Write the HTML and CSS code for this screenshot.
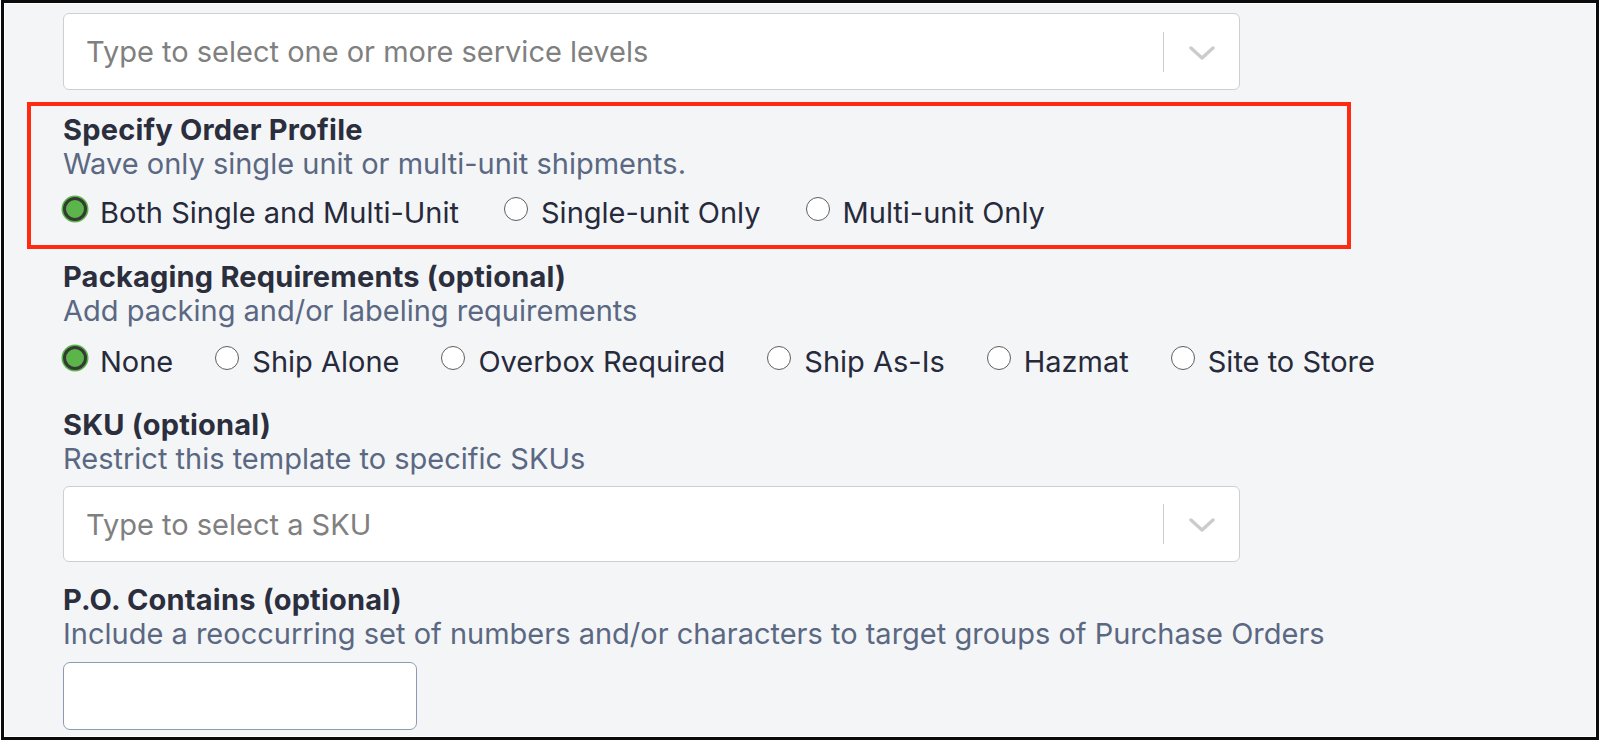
FILE: index.html
```html
<!DOCTYPE html>
<html lang="en">
<head>
<meta charset="utf-8">
<title>Wave template</title>
<link rel="stylesheet" href="styles.css">
</head>
<body>
<div class="frame">
  <div class="form">
    <div class="select select-top">
      <span class="placeholder">Type to select one or more service levels</span>
      <span class="indicators">
        <span class="divider"></span>
        <span class="chevron"><svg width="26" height="16" viewBox="0 0 26 16"><path d="M2 3 L13 13 L24 3" fill="none" stroke="#cccccc" stroke-width="3.4" stroke-linecap="round" stroke-linejoin="round"/></svg></span>
      </span>
    </div>

    <section class="field highlight">
      <div class="label">Specify Order Profile</div>
      <div class="desc">Wave only single unit or multi-unit shipments.</div>
      <div class="radios radios-1">
        <label class="radio"><span class="dot checked"></span><span class="text">Both Single and Multi-Unit</span></label>
        <label class="radio"><span class="dot"></span><span class="text">Single-unit Only</span></label>
        <label class="radio"><span class="dot"></span><span class="text">Multi-unit Only</span></label>
      </div>
    </section>

    <section class="field pack">
      <div class="label">Packaging Requirements (optional)</div>
      <div class="desc">Add packing and/or labeling requirements</div>
      <div class="radios radios-2">
        <label class="radio"><span class="dot checked"></span><span class="text">None</span></label>
        <label class="radio"><span class="dot"></span><span class="text">Ship Alone</span></label>
        <label class="radio"><span class="dot"></span><span class="text">Overbox Required</span></label>
        <label class="radio"><span class="dot"></span><span class="text">Ship As-Is</span></label>
        <label class="radio"><span class="dot"></span><span class="text">Hazmat</span></label>
        <label class="radio"><span class="dot"></span><span class="text">Site to Store</span></label>
      </div>
    </section>

    <section class="field sku">
      <div class="label">SKU (optional)</div>
      <div class="desc">Restrict this template to specific SKUs</div>
      <div class="select select-sku">
        <span class="placeholder">Type to select a SKU</span>
        <span class="indicators">
          <span class="divider"></span>
          <span class="chevron"><svg width="26" height="16" viewBox="0 0 26 16"><path d="M2 3 L13 13 L24 3" fill="none" stroke="#cccccc" stroke-width="3.4" stroke-linecap="round" stroke-linejoin="round"/></svg></span>
        </span>
      </div>
    </section>

    <section class="field po">
      <div class="label">P.O. Contains (optional)</div>
      <div class="desc">Include a reoccurring set of numbers and/or characters to target groups of Purchase Orders</div>
      <div class="text-input"></div>
    </section>
  </div>
</div>
</body>
</html>
```

FILE: styles.css
```css
* { box-sizing: border-box; }

html, body {
  margin: 0;
  padding: 0;
  background: #ffffff;
}

body {
  font-family: Inter, "Noto Sans", "Liberation Sans", sans-serif;
  font-size: 29px;
  line-height: 31px;
  color: #2b2e3d;
}

.frame {
  margin-left: 1px;
  width: 1598px;
  height: 740px;
  border: 3px solid #0b0b0b;
  background: #f4f5f7;
  box-shadow: inset 0 0 0 1px #ffffff;
  overflow: hidden;
}

.form {
  padding: 10px 0 0 59px;
}

.select {
  width: 1177px;
  height: 77px;
  background: #ffffff;
  border: 1.5px solid #cfcfcf;
  border-radius: 6px;
  display: flex;
  align-items: center;
  padding-left: 22px;
}

.placeholder {
  flex: 1;
  color: #808080;
  font-size: 29px;
  white-space: nowrap;
}

.indicators {
  display: flex;
  align-items: center;
  height: 100%;
}

.divider {
  width: 1.5px;
  height: 40px;
  background: #cccccc;
}

.chevron {
  width: 75px;
  display: flex;
  justify-content: center;
  align-items: center;
  padding-top: 2px;
}

.field { display: block; }

.label {
  font-weight: 700;
  color: #2b2e3d;
  font-size: 29px;
  letter-spacing: 0.2px;
  white-space: nowrap;
}

.desc {
  margin-top: 3px;
  color: #5a6882;
  font-size: 29px;
  white-space: nowrap;
}

.highlight {
  margin: 12px 0 0 -36px;
  width: 1324px;
  border: 4px solid #ff2a10;
  padding: 8px 0 17px 32px;
}

.radios {
  display: flex;
  gap: 45px;
  margin-top: 18px;
  white-space: nowrap;
}

.radios-2 {
  margin-top: 20px;
  gap: 42px;
}

.radio {
  display: flex;
  align-items: flex-start;
  gap: 13px;
  color: #262a3b;
  font-size: 29px;
}

.dot {
  width: 24px;
  height: 24px;
  margin-top: 0;
  border-radius: 50%;
  background: #ffffff;
  border: 1.5px solid #5e5e5e;
  flex: none;
}

.dot.checked {
  background: #5cb54a;
  border: 3.5px solid #353a35;
  box-shadow: 0 0 0 1.5px #5cb54a;
}

.pack { margin-top: 12px; }

.sku { margin-top: 32px; }

.select-sku {
  margin-top: 12px;
  height: 76px;
}

.po { margin-top: 22px; }

.text-input {
  margin-top: 13px;
  width: 354px;
  height: 68px;
  background: #ffffff;
  border: 1.5px solid #8c9ab2;
  border-radius: 7px;
}
```
